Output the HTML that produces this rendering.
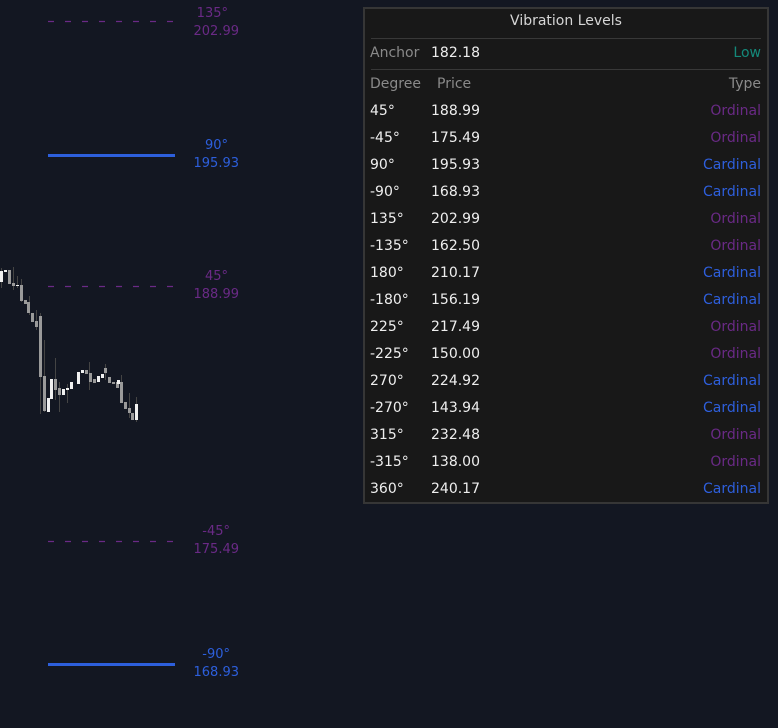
<!DOCTYPE html>
<html><head><meta charset="utf-8"><style>
html,body{margin:0;padding:0;background:#131722;width:778px;height:728px;overflow:hidden;font-family:"DejaVu Sans","Liberation Sans",sans-serif;}
.p{position:absolute;left:363px;top:7px;width:402px;height:493px;background:#181818;border:2px solid #363636;}
.t{position:absolute;left:0;right:0;top:4px;text-align:center;color:#d6d6d6;font-size:14px;}
.hr{position:absolute;left:6px;right:6px;height:1px;background:#383838;}
.r{position:absolute;left:5px;right:6px;height:20px;font-size:14px;line-height:20px;}
.r .a{position:absolute;left:0;color:#eee;}
.r .b{position:absolute;left:61px;color:#eee;}
.r .c{position:absolute;right:0;}
.o{color:#6a2a86}.cd{color:#2e5fdc}
.g{color:#8a8a8a!important}
</style></head><body>
<svg width="360" height="728" style="position:absolute;left:0;top:0" font-family="DejaVu Sans,Liberation Sans,sans-serif" font-size="13">
<g stroke="#6a2a86" stroke-width="1.2" stroke-dasharray="6,11">
<line x1="48" y1="21.5" x2="176" y2="21.5"/>
<line x1="48" y1="286.5" x2="176" y2="286.5"/>
<line x1="48" y1="541.5" x2="176" y2="541.5"/>
</g>
<rect x="48" y="154" width="127" height="3" fill="#2d5fdc"/>
<rect x="48" y="663" width="127" height="3" fill="#2d5fdc"/>
<g text-anchor="end">
<text x="228" y="17" fill="#6a2a86">135°</text><text x="239" y="35" fill="#6a2a86">202.99</text>
<text x="228" y="149" fill="#2d5fdc">90°</text><text x="239" y="167" fill="#2d5fdc">195.93</text>
<text x="228" y="280" fill="#6a2a86">45°</text><text x="239" y="298" fill="#6a2a86">188.99</text>
<text x="230" y="535" fill="#6a2a86">-45°</text><text x="239" y="553" fill="#6a2a86">175.49</text>
<text x="230" y="658" fill="#2d5fdc">-90°</text><text x="239" y="676" fill="#2d5fdc">168.93</text>
</g>
<g stroke="#444" stroke-width="1">
<line x1="1.5" y1="268" x2="1.5" y2="288"/><line x1="13.5" y1="267" x2="13.5" y2="290"/>
<line x1="17.5" y1="276" x2="17.5" y2="288"/><line x1="21.5" y1="279" x2="21.5" y2="302"/>
<line x1="29.5" y1="296" x2="29.5" y2="315"/><line x1="36.5" y1="310" x2="36.5" y2="330"/>
<line x1="40.5" y1="313" x2="40.5" y2="414"/><line x1="44.5" y1="340" x2="44.5" y2="412"/>
<line x1="55.5" y1="358" x2="55.5" y2="400"/><line x1="59.5" y1="382" x2="59.5" y2="412"/>
<line x1="67.5" y1="384" x2="67.5" y2="403"/><line x1="89.5" y1="362" x2="89.5" y2="390"/>
<line x1="105.5" y1="364" x2="105.5" y2="380"/><line x1="121.5" y1="375" x2="121.5" y2="403"/>
<line x1="129.5" y1="393" x2="129.5" y2="418"/><line x1="136.5" y1="397" x2="136.5" y2="422"/>
</g>
<g fill="#9a9a9a">
<rect x="8" y="270" width="3" height="14"/><rect x="12" y="283" width="3" height="3"/>
<rect x="20" y="285" width="3" height="16"/><rect x="24" y="300" width="3" height="4"/>
<rect x="27" y="302" width="3" height="11"/><rect x="31" y="313" width="3" height="9"/>
<rect x="35" y="321" width="3" height="6"/><rect x="39" y="316" width="3" height="61"/>
<rect x="43" y="376" width="3" height="35"/><rect x="54" y="379" width="3" height="11"/>
<rect x="58" y="388" width="3" height="7"/><rect x="85" y="370" width="3" height="4"/>
<rect x="89" y="373" width="3" height="9"/><rect x="93" y="379" width="3" height="4"/>
<rect x="104" y="368" width="3" height="5"/><rect x="108" y="377" width="3" height="6"/>
<rect x="112" y="382" width="3" height="2"/><rect x="116" y="382" width="3" height="6"/>
<rect x="120" y="382" width="3" height="21"/><rect x="124" y="402" width="3" height="7"/>
<rect x="128" y="408" width="3" height="5"/><rect x="131" y="413" width="3" height="7"/>
</g>
<g fill="#f0f0f0">
<rect x="0" y="271" width="3" height="11"/><rect x="4" y="270" width="3" height="2"/>
<rect x="16" y="285" width="3" height="1"/><rect x="47" y="398" width="3" height="14"/>
<rect x="50" y="379" width="3" height="20"/><rect x="62" y="389" width="3" height="6"/>
<rect x="66" y="388" width="3" height="2"/><rect x="70" y="382" width="3" height="7"/>
<rect x="77" y="372" width="3" height="12"/><rect x="81" y="370" width="3" height="3"/>
<rect x="97" y="376" width="3" height="6"/><rect x="101" y="374" width="3" height="4"/>
<rect x="117" y="380" width="3" height="4"/><rect x="135" y="404" width="3" height="16"/>
</g>
</svg>
<div class="p">
<div class="t">Vibration Levels</div>
<div class="hr" style="top:29px"></div>
<div class="r" style="top:34px"><span class="a g">Anchor</span><span class="b">182.18</span><span class="c" style="color:#14897a">Low</span></div>
<div class="hr" style="top:60px"></div>
<div class="r" style="top:65px"><span class="a g">Degree</span><span class="b g" style="left:67px">Price</span><span class="c g">Type</span></div>
<div class="r" style="top:92px"><span class="a">45°</span><span class="b">188.99</span><span class="c o">Ordinal</span></div>
<div class="r" style="top:119px"><span class="a">-45°</span><span class="b">175.49</span><span class="c o">Ordinal</span></div>
<div class="r" style="top:146px"><span class="a">90°</span><span class="b">195.93</span><span class="c cd">Cardinal</span></div>
<div class="r" style="top:173px"><span class="a">-90°</span><span class="b">168.93</span><span class="c cd">Cardinal</span></div>
<div class="r" style="top:200px"><span class="a">135°</span><span class="b">202.99</span><span class="c o">Ordinal</span></div>
<div class="r" style="top:227px"><span class="a">-135°</span><span class="b">162.50</span><span class="c o">Ordinal</span></div>
<div class="r" style="top:254px"><span class="a">180°</span><span class="b">210.17</span><span class="c cd">Cardinal</span></div>
<div class="r" style="top:281px"><span class="a">-180°</span><span class="b">156.19</span><span class="c cd">Cardinal</span></div>
<div class="r" style="top:308px"><span class="a">225°</span><span class="b">217.49</span><span class="c o">Ordinal</span></div>
<div class="r" style="top:335px"><span class="a">-225°</span><span class="b">150.00</span><span class="c o">Ordinal</span></div>
<div class="r" style="top:362px"><span class="a">270°</span><span class="b">224.92</span><span class="c cd">Cardinal</span></div>
<div class="r" style="top:389px"><span class="a">-270°</span><span class="b">143.94</span><span class="c cd">Cardinal</span></div>
<div class="r" style="top:416px"><span class="a">315°</span><span class="b">232.48</span><span class="c o">Ordinal</span></div>
<div class="r" style="top:443px"><span class="a">-315°</span><span class="b">138.00</span><span class="c o">Ordinal</span></div>
<div class="r" style="top:470px"><span class="a">360°</span><span class="b">240.17</span><span class="c cd">Cardinal</span></div>
</div>
</body></html>
